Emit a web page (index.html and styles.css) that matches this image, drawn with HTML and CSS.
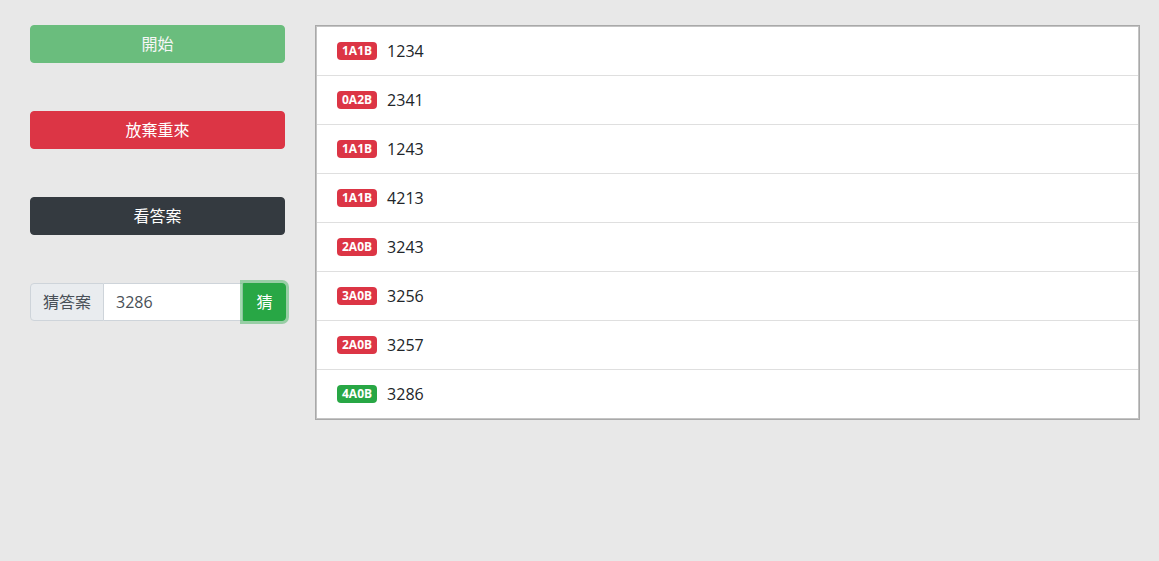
FILE: index.html
```html
<!DOCTYPE html>
<html lang="zh-Hant">
<head>
<meta charset="utf-8">
<title>猜數字</title>
<link rel="stylesheet" href="styles.css">
</head>
<body>
<div class="page">
  <div class="side">
    <button class="btn btn-success disabled">開始</button>
    <button class="btn btn-danger">放棄重來</button>
    <button class="btn btn-dark">看答案</button>
    <div class="input-group">
      <span class="prepend">猜答案</span>
      <input class="field" type="text" value="3286">
      <button class="btn-guess">猜</button>
    </div>
  </div>
  <div class="results">
    <ul class="list">
      <li class="item"><span class="badge red">1A1B</span><span class="num">1234</span></li>
      <li class="item"><span class="badge red">0A2B</span><span class="num">2341</span></li>
      <li class="item"><span class="badge red">1A1B</span><span class="num">1243</span></li>
      <li class="item"><span class="badge red">1A1B</span><span class="num">4213</span></li>
      <li class="item"><span class="badge red">2A0B</span><span class="num">3243</span></li>
      <li class="item"><span class="badge red">3A0B</span><span class="num">3256</span></li>
      <li class="item"><span class="badge red">2A0B</span><span class="num">3257</span></li>
      <li class="item"><span class="badge green">4A0B</span><span class="num">3286</span></li>
    </ul>
  </div>
</div>
</body>
</html>
```
FILE: styles.css
```css
* { box-sizing: border-box; }
html, body { margin: 0; padding: 0; }
body {
  background: #e8e8e8;
  font-family: "Open Sans", "Noto Sans CJK TC", sans-serif;
  font-size: 16px;
  line-height: 24px;
  color: #212529;
}
.page {
  display: flex;
  align-items: flex-start;
  gap: 30px;
  padding: 25px 19px 0 30px;
}
.side {
  width: 255px;
  flex: none;
  display: flex;
  flex-direction: column;
  gap: 48px;
}
.btn {
  display: block;
  width: 100%;
  height: 38px;
  border: 1px solid transparent;
  border-radius: 4px;
  font: inherit;
  color: #fff;
  padding: 6px 12px;
  text-align: center;
}
.btn-success { background: #28a745; border-color: #28a745; }
.disabled { opacity: .65; }
.btn-danger { background: #dc3545; border-color: #dc3545; }
.btn-dark { background: #343a40; border-color: #343a40; }
.input-group {
  display: flex;
  height: 38px;
  margin-right: -1px;
}
.prepend {
  flex: none;
  background: #e9ecef;
  border: 1px solid #ced4da;
  border-radius: 4px 0 0 4px;
  padding: 6px 12px;
  color: #495057;
}
.field {
  flex: 1;
  min-width: 0;
  border: 1px solid #ced4da;
  border-left: none;
  background: #fff;
  font: inherit;
  color: #495057;
  padding: 6px 12px;
  outline: none;
}
.btn-guess {
  flex: none;
  width: 43px;
  background: #28a745;
  border: 1px solid #28a745;
  border-radius: 0 4px 4px 0;
  color: #fff;
  font: inherit;
  padding: 6px 12px;
  box-shadow: 0 0 0 3px rgba(72, 180, 97, .5);
  position: relative;
  z-index: 1;
}
.results {
  flex: 1;
  border: 1px solid #a9a9a9;
}
.list {
  list-style: none;
  margin: 0;
  padding: 0;
  border: 1px solid #c4c4c4;
  background: #fff;
}
.item {
  display: flex;
  align-items: center;
  gap: 10px;
  padding: 12px 20px;
  border-bottom: 1px solid #dfdfdf;
  height: 49px;
}
.item:last-child { border-bottom: none; height: 48px; }
.badge {
  display: inline-block;
  font-size: 12px;
  font-weight: 700;
  line-height: 1;
  padding: 3px 5px;
  border-radius: 4px;
  color: #fff;
}
.red { background: #dc3545; }
.green { background: #28a745; }
.num { color: #212529; }
```
